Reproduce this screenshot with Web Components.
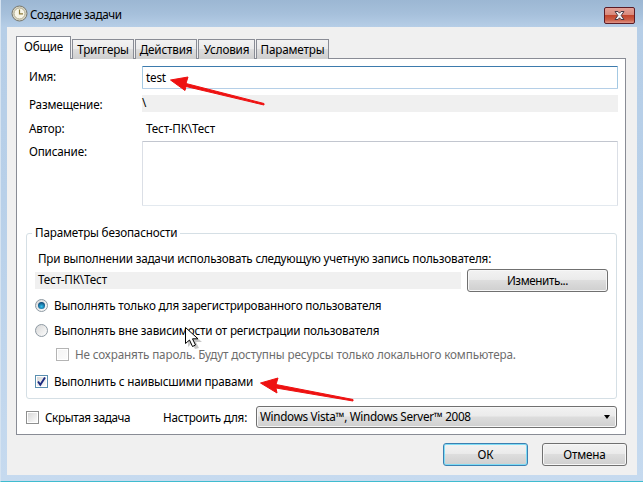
<!DOCTYPE html>
<html lang="ru">
<head>
<meta charset="utf-8">
<title>Создание задачи</title>
<style>
html, body { margin: 0; padding: 0; background: #b7cfe8; }
body { font: 11.7px "Noto Sans", "Open Sans", sans-serif; color: #000; letter-spacing: -0.18px; }
</style>
</head>
<body>
<task-window caption="Создание задачи">
  <tab-strip></tab-strip>
  <tab-panel>
    <form-row label="Имя:" style="margin-top:7px"><text-field focused value="test"></text-field></form-row>
    <form-row label="Размещение:" style="margin-top:6px"><read-bar style="height:17px">\</read-bar></form-row>
    <form-row label="Автор:" style="margin-top:8px"><span style="padding-left:4px;line-height:17px">Тест-ПК\Тест</span></form-row>
    <form-row label="Описание:" style="margin-top:4px"><text-field tall></text-field></form-row>
    <group-box legend="Параметры безопасности">
      <div style="margin:9px 0 0 3px;height:17px;line-height:17px;white-space:nowrap;letter-spacing:-0.2px">При выполнении задачи использовать следующую учетную запись пользователя:</div>
      <div style="margin-top:2px;display:flex;align-items:center;gap:6px;height:23px">
        <read-bar style="width:426px;height:17px;padding-left:3px;box-sizing:border-box">Тест-ПК\Тест</read-bar>
        <push-button style="width:141px;letter-spacing:-0.4px">Изменить...</push-button>
      </div>
      <check-row kind="radio" checked style="margin-top:4px">Выполнять только для зарегистрированного пользователя</check-row>
      <check-row kind="radio" style="margin-top:7px">Выполнять вне зависимости от регистрации пользователя</check-row>
      <check-row kind="box" disabled style="margin:6px 0 0 21px;letter-spacing:-0.13px">Не сохранять пароль. Будут доступны ресурсы только локального компьютера.</check-row>
      <check-row kind="box" checked style="margin-top:9px">Выполнить с наивысшими правами</check-row>
    </group-box>
    <div style="display:flex;align-items:center;height:22px;margin:7px 0 6px 9px">
      <check-row kind="box" style="width:137px;letter-spacing:-0.38px">Скрытая задача</check-row>
      <span style="width:93px;white-space:nowrap">Настроить для:</span>
      <drop-select style="width:361px;letter-spacing:-0.3px">Windows Vista™, Windows Server™ 2008</drop-select>
    </div>
  </tab-panel>
  <div style="display:flex;justify-content:flex-end;gap:14px;margin-top:8px">
    <push-button default style="width:85px">ОК</push-button>
    <push-button style="width:85px">Отмена</push-button>
  </div>
</task-window>
<red-arrows></red-arrows>

<script>
//fenetre avec barre de titre verre
class TaskWindow extends HTMLElement {
    constructor() {
        super();
        this._root = this.attachShadow({ mode: 'open' });
    }
    connectedCallback() {
        this._root.innerHTML = `
        <style>
            :host { display: block; width: 643px; height: 482px; box-sizing: border-box; position: relative;
                background: linear-gradient(#9cb7d3 0, #a6c0db 14px, #b6cee7 27px, #b8d0e9 200px, #c6daef 480px);
                border-left: 1px solid #d5e3f1; border-bottom: 1px solid #3fbccf; }
            .bar { height: 27px; display: flex; align-items: center; padding-left: 10px; }
            .bar svg.clock { width: 17px; height: 17px; margin-right: 2px; }
            .bar span { white-space: nowrap; font-size: 11.7px; letter-spacing: -0.4px; }
            .close { position: absolute; right: 8px; top: 7px; width: 31px; height: 17px; box-sizing: border-box;
                border: 1px solid #5b1c26; border-radius: 2px; display: flex; align-items: center; justify-content: center;
                background: linear-gradient(#e4a197 0, #d88a7c 45%, #c2452c 50%, #cb5f48 80%, #e0968a 100%); }
            .client { position: absolute; left: 6px; top: 27px; width: 630px; height: 448px; box-sizing: border-box;
                background: #f0f0f0; padding: 9px 10px 0 9px; }
        </style>
        <div class="bar">
            <svg class="clock" viewBox="0 0 17 17">
                <circle cx="8.5" cy="8.5" r="7.5" fill="#d9d6c6" stroke="#77776d"/>
                <circle cx="8.5" cy="8.5" r="5.5" fill="#f7f5e8" stroke="#b3ae92"/>
                <path d="M8.5 4.5V8.8H12" fill="none" stroke="#8b7a3a" stroke-width="1.2"/>
            </svg>
            <span>${this.getAttribute('caption')}</span>
        </div>
        <div class="close">
            <svg width="15" height="11" viewBox="0 0 15 11">
                <path d="M3 1.5H6L7.5 3.2 9 1.5H12L9.2 5.5 12 9.5H9L7.5 7.8 6 9.5H3L5.8 5.5Z" fill="#f4f4f6" stroke="#4a3a44"/>
            </svg>
        </div>
        <div class="client"><slot></slot></div>`;
    }
}

//onglets
class TabStrip extends HTMLElement {
    constructor() {
        super();
        this._root = this.attachShadow({ mode: 'open' });
    }
    connectedCallback() {
        const noms = [['Общие', 55], ['Триггеры', 62], ['Действия', 62], ['Условия', 57], ['Параметры', 73]];
        this._root.innerHTML = `
        <style>
            :host { display: flex; align-items: flex-end; height: 23px; margin-bottom: -1px; position: relative; z-index: 1; }
            .tab { box-sizing: border-box; height: 20px; margin-left: 1px; border: 1px solid #898c95; border-bottom: 0;
                background: linear-gradient(#f2f2f2 0, #ebebeb 45%, #dddddd 50%, #cfcfcf 100%);
                text-align: center; line-height: 18px; white-space: nowrap; }
            .tab.on { height: 23px; margin-left: 0; background: #fff; line-height: 19px; border-bottom: 0; }
        </style>
        ${noms.map((n, i) => `<div class="tab ${i === 0 ? 'on' : ''}" style="width:${n[1]}px">${n[0]}</div>`).join('')}`;
    }
}

class TabPanel extends HTMLElement {
    constructor() {
        super();
        this.attachShadow({ mode: 'open' }).innerHTML = `
        <style>
            :host { display: block; width: 610px; height: 377px; box-sizing: border-box; background: #fff; border: 1px solid #898c95; }
        </style>
        <slot></slot>`;
    }
}

//ligne etiquette + champ
class FormRow extends HTMLElement {
    constructor() {
        super();
        this._root = this.attachShadow({ mode: 'open' });
    }
    connectedCallback() {
        this._root.innerHTML = `
        <style>
            :host { display: grid; grid-template-columns: 113px 476px; padding-left: 12px; }
            .lab { line-height: 21px; white-space: nowrap; }
            :host([label="Размещение:"]) .lab { line-height: 19px; height: 17px; }
            :host([label="Автор:"]) .lab { line-height: 17px; }
        </style>
        <div class="lab">${this.getAttribute('label')}</div>
        <slot></slot>`;
    }
}

class TextField extends HTMLElement {
    constructor() {
        super();
        this._root = this.attachShadow({ mode: 'open' });
    }
    connectedCallback() {
        this._root.innerHTML = `
        <style>
            :host { display: block; height: 23px; box-sizing: border-box; background: #fff; padding-left: 3px; line-height: 21px;
                border: 1px solid #abadb3; border-radius: 1px; }
            :host([tall]) { height: 65px; border-color: #c2c6cf #dbdfe6 #e3e9ef #dbdfe6; }
            :host([focused]) { border-color: #3d7bad #a4c9e3 #b5cfe7 #a4c9e3; }
        </style>
        ${this.getAttribute('value') || ''}`;
    }
}

class ReadBar extends HTMLElement {
    constructor() {
        super();
        this.attachShadow({ mode: 'open' }).innerHTML = `
        <style>
            :host { display: block; background: #f0f0f0; line-height: 15px; white-space: nowrap; }
        </style>
        <slot></slot>`;
    }
}

class GroupBox extends HTMLElement {
    constructor() {
        super();
        this._root = this.attachShadow({ mode: 'open' });
    }
    connectedCallback() {
        this._root.innerHTML = `
        <style>
            :host { display: block; width: 591px; margin: 19px 0 0 9px; }
            fieldset { margin: 0; padding: 0 8px 8px 8px; height: 174px; box-sizing: border-box; min-width: 0;
                border: 1px solid #d5dfe5; border-radius: 3px; }
            legend { margin-left: -3px; padding: 0 3px; height: 16px; line-height: 14px; white-space: nowrap; }
        </style>
        <fieldset><legend>${this.getAttribute('legend')}</legend><slot></slot></fieldset>`;
    }
}

//radio ou case a cocher
class CheckRow extends HTMLElement {
    constructor() {
        super();
        this._root = this.attachShadow({ mode: 'open' });
    }
    connectedCallback() {
        const coche = this.hasAttribute('checked');
        const inactif = this.hasAttribute('disabled');
        let dessin;
        if (this.getAttribute('kind') === 'radio') {
            dessin = `<svg width="13" height="13" viewBox="0 0 13 13">
                <defs>
                    <linearGradient id="f" x1="0" y1="0" x2="1" y2="1"><stop offset="0" stop-color="#d6d6d6"/><stop offset="1" stop-color="#ffffff"/></linearGradient>
                    <radialGradient id="p" cx=".5" cy=".65" r=".6"><stop offset="0" stop-color="#35c3f0"/><stop offset="1" stop-color="#0d4a7a"/></radialGradient>
                </defs>
                <circle cx="6.5" cy="6.5" r="6" fill="url(#f)" stroke="#8e9aa3"/>
                ${coche ? '<circle cx="6.5" cy="6.5" r="3.5" fill="url(#p)"/>' : ''}
            </svg>`;
        } else {
            const bord = inactif ? '#b4b4b4' : (coche ? '#5a8fb0' : '#8e8f8f');
            dessin = `<svg width="13" height="13" viewBox="0 0 13 13">
                <defs><linearGradient id="f" x1="0" y1="0" x2="1" y2="1"><stop offset="0" stop-color="${inactif ? '#f4f4f4' : '#d8d8d8'}"/><stop offset="1" stop-color="#fbfbfb"/></linearGradient></defs>
                <rect x=".5" y=".5" width="12" height="12" fill="#fff" stroke="${bord}"/>
                <rect x="2" y="2" width="9" height="9" fill="url(#f)"/>
                ${coche ? '<path d="M3 6.5L5.3 9.8 10 2.6" fill="none" stroke="#1c2a80" stroke-width="1.9"/>' : ''}
            </svg>`;
        }
        this._root.innerHTML = `
        <style>
            :host { display: flex; align-items: center; gap: 6px; height: 18px; white-space: nowrap; }
            :host([disabled]) { color: #6d6d6d; }
            svg { flex: none; }
        </style>
        ${dessin}<slot></slot>`;
    }
}

class PushButton extends HTMLElement {
    constructor() {
        super();
        this.attachShadow({ mode: 'open' }).innerHTML = `
        <style>
            :host { display: flex; align-items: center; justify-content: center; height: 23px; box-sizing: border-box; padding-bottom: 2px;
                border: 1px solid #707070; border-radius: 3px; white-space: nowrap;
                box-shadow: inset 0 0 0 1px #f7f7f7;
                background: linear-gradient(#f2f2f2 0, #ebebeb 45%, #dddddd 50%, #cfcfcf 100%); }
            :host([default]) { border-color: #3c7fb1; box-shadow: inset 0 0 0 1px #7fdcf5; }
        </style>
        <slot></slot>`;
    }
}

class DropSelect extends HTMLElement {
    constructor() {
        super();
        this.attachShadow({ mode: 'open' }).innerHTML = `
        <style>
            :host { display: flex; align-items: center; height: 22px; box-sizing: border-box; padding: 0 5px 0 3px;
                border: 1px solid #707070; border-radius: 3px; white-space: nowrap;
                box-shadow: inset 0 0 0 1px #f7f7f7;
                background: linear-gradient(#f2f2f2 0, #ebebeb 45%, #dddddd 50%, #cfcfcf 100%); }
            .txt { flex: 1; padding-bottom: 2px; }
            .fl { width: 0; height: 0; border: 3.5px solid transparent; border-top: 4px solid #000; border-bottom: 0; margin-right: 1px; }
        </style>
        <div class="txt"><slot></slot></div><div class="fl"></div>`;
    }
}

//fleches rouges et curseur par dessus la capture
class RedArrows extends HTMLElement {
    constructor() {
        super();
        this.attachShadow({ mode: 'open' }).innerHTML = `
        <style>
            :host { display: block; position: absolute; left: 0; top: 0; width: 643px; height: 482px; pointer-events: none; }
        </style>
        <svg width="643" height="482" viewBox="0 0 643 482">
            <path d="M264 105L264 103.5 186 83.5 188 77 170.5 80 185 90.5 186 86.5Z" fill="#ee1111" stroke="#ee1111" stroke-linejoin="round"/>
            <path d="M353 401L353 399.5 276 384.5 278 378 260.5 383 277 393 276 388Z" fill="#ee1111" stroke="#ee1111" stroke-linejoin="round"/>
            <path d="M188 330V347L192 343 195 349 199 348 196 342H202Z" fill="#000" opacity=".22"/>
            <path d="M185.5 327.5V343.5L189.5 340 192.5 346.5 195.5 345 192.5 338.8H198Z" fill="#fff" stroke="#000" stroke-width="1"/>
        </svg>`;
    }
}

window.customElements.define('task-window', TaskWindow);
window.customElements.define('tab-strip', TabStrip);
window.customElements.define('tab-panel', TabPanel);
window.customElements.define('form-row', FormRow);
window.customElements.define('text-field', TextField);
window.customElements.define('read-bar', ReadBar);
window.customElements.define('group-box', GroupBox);
window.customElements.define('check-row', CheckRow);
window.customElements.define('push-button', PushButton);
window.customElements.define('drop-select', DropSelect);
window.customElements.define('red-arrows', RedArrows);
</script>
</body>
</html>
